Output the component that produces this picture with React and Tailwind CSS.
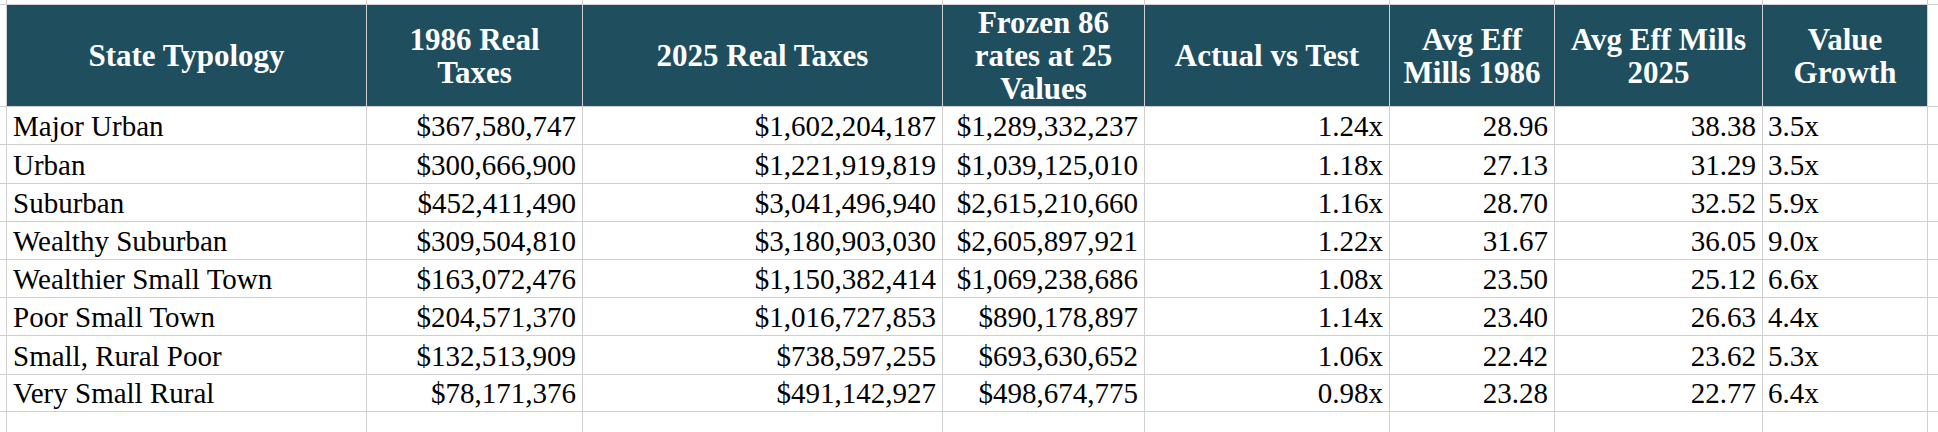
import React from "react";

const headers = [
  ["State Typology"],
  ["1986 Real", "Taxes"],
  ["2025 Real Taxes"],
  ["Frozen 86", "rates at 25", "Values"],
  ["Actual vs Test"],
  ["Avg Eff", "Mills 1986"],
  ["Avg Eff Mills", "2025"],
  ["Value", "Growth"],
];

const rows = [
  ["Major Urban", "$367,580,747", "$1,602,204,187", "$1,289,332,237", "1.24x", "28.96", "38.38", "3.5x"],
  ["Urban", "$300,666,900", "$1,221,919,819", "$1,039,125,010", "1.18x", "27.13", "31.29", "3.5x"],
  ["Suburban", "$452,411,490", "$3,041,496,940", "$2,615,210,660", "1.16x", "28.70", "32.52", "5.9x"],
  ["Wealthy Suburban", "$309,504,810", "$3,180,903,030", "$2,605,897,921", "1.22x", "31.67", "36.05", "9.0x"],
  ["Wealthier Small Town", "$163,072,476", "$1,150,382,414", "$1,069,238,686", "1.08x", "23.50", "25.12", "6.6x"],
  ["Poor Small Town", "$204,571,370", "$1,016,727,853", "$890,178,897", "1.14x", "23.40", "26.63", "4.4x"],
  ["Small, Rural Poor", "$132,513,909", "$738,597,255", "$693,630,652", "1.06x", "22.42", "23.62", "5.3x"],
  ["Very Small Rural", "$78,171,376", "$491,142,927", "$498,674,775", "0.98x", "23.28", "22.77", "6.4x"],
];

function Blank() {
  return <div className="bg-white" />;
}

export default function App() {
  const cells = [];
  for (let i = 0; i < 10; i++) cells.push(<Blank key={`t${i}`} />);
  cells.push(<Blank key="hl" />);
  headers.forEach((h, i) => {
    cells.push(
      <div
        key={`h${i}`}
        className="bg-[#1f4e5f] text-white font-['Liberation_Serif'] font-bold text-[31px] leading-[33px] flex items-center justify-center text-center whitespace-nowrap"
      >
        <div>
          {h.map((line, j) => (
            <div key={j}>{line}</div>
          ))}
        </div>
      </div>
    );
  });
  cells.push(<Blank key="hr" />);
  rows.forEach((r, ri) => {
    cells.push(<Blank key={`l${ri}`} />);
    r.forEach((v, ci) => {
      let align = "justify-end pr-[6px]";
      if (ci === 0) align = "justify-start pl-[6px]";
      if (ci === 7) align = "justify-start pl-[5px]";
      cells.push(
        <div
          key={`c${ri}-${ci}`}
          className={`bg-white text-black font-['Liberation_Serif'] text-[29px] leading-none flex items-end pb-[3px] whitespace-nowrap overflow-hidden ${align}`}
        >
          {v}
        </div>
      );
    });
    cells.push(<Blank key={`r${ri}`} />);
  });
  for (let i = 0; i < 10; i++) cells.push(<Blank key={`b${i}`} />);

  return (
    <div className="w-[1938px] h-[432px] overflow-hidden bg-white font-['Liberation_Serif']">
      <div className="grid gap-px bg-[#d0d0d0] h-[440px] grid-cols-[6px_359px_215px_359px_201px_244px_164px_207px_164px_1fr] grid-rows-[4px_101px_37px_38px_37px_37px_37px_37px_38px_36px_1fr]">
        {cells}
      </div>
    </div>
  );
}
